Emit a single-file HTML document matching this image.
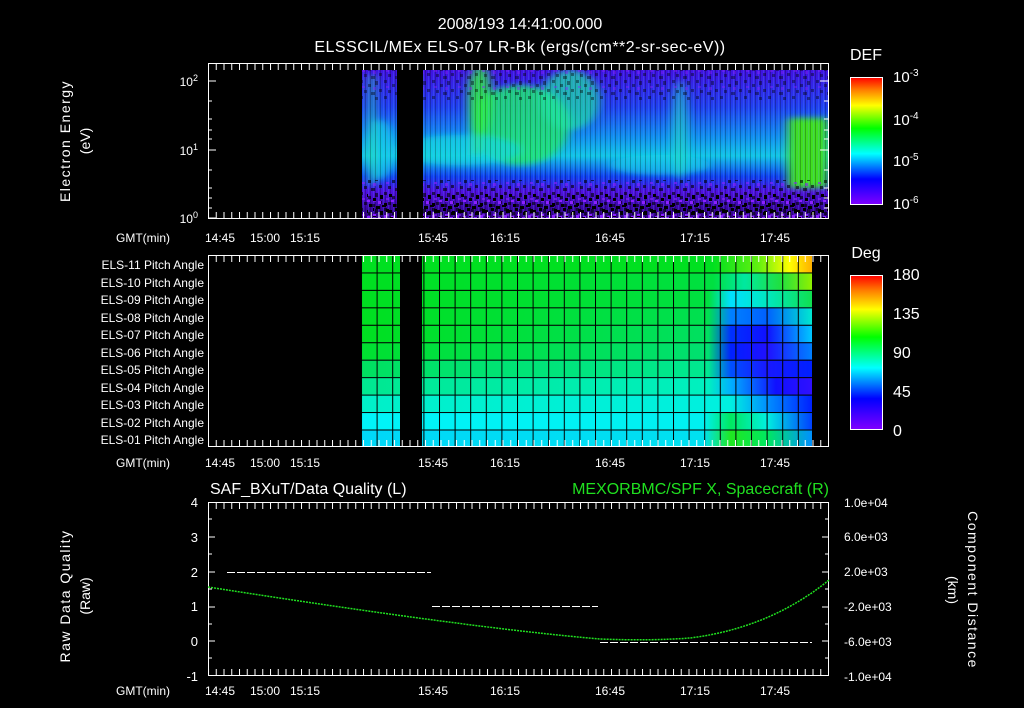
<!DOCTYPE html>
<html><head><meta charset="utf-8"><style>
html,body{margin:0;padding:0;background:#000;}
svg{display:block;font-family:"Liberation Sans",sans-serif;}
</style></head><body>
<svg width="1024" height="708" viewBox="0 0 1024 708" xmlns="http://www.w3.org/2000/svg">
<defs>
<filter id="bl" x="-0.1" y="-0.1" width="1.2" height="1.2"><feGaussianBlur stdDeviation="5 3"/></filter>
<linearGradient id="cb" x1="0" y1="1" x2="0" y2="0">
<stop offset="0" stop-color="#8000ff"/><stop offset="0.2" stop-color="#0000ff"/><stop offset="0.4" stop-color="#00ffff"/><stop offset="0.6" stop-color="#00ff00"/><stop offset="0.78" stop-color="#ffff00"/><stop offset="0.9" stop-color="#ff8000"/><stop offset="1" stop-color="#ff0000"/>
</linearGradient>
<linearGradient id="sv" x1="0" y1="0" x2="0" y2="1">
<stop offset="0" stop-color="#4010e0"/><stop offset="0.25" stop-color="#2040f0"/><stop offset="0.45" stop-color="#1090f0"/><stop offset="0.58" stop-color="#10c8e8"/><stop offset="0.72" stop-color="#1040f0"/><stop offset="0.82" stop-color="#5010e0"/><stop offset="1" stop-color="#300080"/>
</linearGradient>
<pattern id="noise" width="24" height="16" patternUnits="userSpaceOnUse">
<rect x="0" y="0" width="3" height="3" fill="#000"/><rect x="8" y="4" width="3" height="3" fill="#000"/><rect x="15" y="1" width="3" height="4" fill="#000"/><rect x="4" y="10" width="3" height="3" fill="#000"/><rect x="19" y="9" width="3" height="3" fill="#000"/><rect x="11" y="12" width="4" height="3" fill="#000"/><rect x="2" y="6" width="3" height="2" fill="#8a20ff"/><rect x="13" y="7" width="3" height="3" fill="#8a20ff"/>
</pattern>
<pattern id="vst" width="5" height="10" patternUnits="userSpaceOnUse">
<rect x="0" y="0" width="1" height="10" fill="#000" opacity="0.25"/><rect x="3" y="0" width="1" height="10" fill="#60a0ff" opacity="0.2"/>
</pattern>
<pattern id="grid" x="361" y="255" width="15.6" height="17.45" patternUnits="userSpaceOnUse">
<rect x="0" y="0" width="15.6" height="1" fill="#000"/><rect x="0" y="0" width="1" height="17.45" fill="#000"/>
</pattern>
<pattern id="tx" x="208" y="0" width="7.75" height="10" patternUnits="userSpaceOnUse"><rect x="0" y="0" width="1" height="10" fill="#fff"/></pattern>
<linearGradient id="r1" x1="361" x2="812" gradientUnits="userSpaceOnUse"><stop offset="0" stop-color="#00e020"/><stop offset="0.78" stop-color="#00e020"/><stop offset="0.88" stop-color="#60f010"/><stop offset="0.95" stop-color="#ffff00"/><stop offset="1" stop-color="#ffb000"/></linearGradient>
<linearGradient id="r2" x1="361" x2="812" gradientUnits="userSpaceOnUse"><stop offset="0" stop-color="#00e020"/><stop offset="0.78" stop-color="#00e040"/><stop offset="0.85" stop-color="#00e8a0"/><stop offset="0.93" stop-color="#20e040"/><stop offset="1" stop-color="#90f000"/></linearGradient>
<linearGradient id="r3" x1="361" x2="812" gradientUnits="userSpaceOnUse"><stop offset="0" stop-color="#00e020"/><stop offset="0.77" stop-color="#00e040"/><stop offset="0.82" stop-color="#00e0ff"/><stop offset="0.9" stop-color="#00e8c0"/><stop offset="1" stop-color="#10e050"/></linearGradient>
<linearGradient id="r4" x1="361" x2="812" gradientUnits="userSpaceOnUse"><stop offset="0" stop-color="#00e020"/><stop offset="0.77" stop-color="#00e050"/><stop offset="0.82" stop-color="#0080ff"/><stop offset="0.9" stop-color="#0060ff"/><stop offset="1" stop-color="#00e8d0"/></linearGradient>
<linearGradient id="r5" x1="361" x2="812" gradientUnits="userSpaceOnUse"><stop offset="0" stop-color="#00e020"/><stop offset="0.77" stop-color="#00e060"/><stop offset="0.82" stop-color="#0030ff"/><stop offset="0.9" stop-color="#1010ff"/><stop offset="1" stop-color="#00c8ff"/></linearGradient>
<linearGradient id="r6" x1="361" x2="812" gradientUnits="userSpaceOnUse"><stop offset="0" stop-color="#00e030"/><stop offset="0.77" stop-color="#00e070"/><stop offset="0.82" stop-color="#0020ff"/><stop offset="0.9" stop-color="#2010ff"/><stop offset="1" stop-color="#0080ff"/></linearGradient>
<linearGradient id="r7" x1="361" x2="812" gradientUnits="userSpaceOnUse"><stop offset="0" stop-color="#00e060"/><stop offset="0.77" stop-color="#00e890"/><stop offset="0.82" stop-color="#0050ff"/><stop offset="0.9" stop-color="#1818ff"/><stop offset="1" stop-color="#0020ff"/></linearGradient>
<linearGradient id="r8" x1="361" x2="812" gradientUnits="userSpaceOnUse"><stop offset="0" stop-color="#00e890"/><stop offset="0.77" stop-color="#00f0c0"/><stop offset="0.82" stop-color="#00b0ff"/><stop offset="0.92" stop-color="#1010ff"/><stop offset="1" stop-color="#3010ff"/></linearGradient>
<linearGradient id="r9" x1="361" x2="812" gradientUnits="userSpaceOnUse"><stop offset="0" stop-color="#00f0c8"/><stop offset="0.82" stop-color="#00f0e0"/><stop offset="0.9" stop-color="#0090ff"/><stop offset="1" stop-color="#0020ff"/></linearGradient>
<linearGradient id="r10" x1="361" x2="812" gradientUnits="userSpaceOnUse"><stop offset="0" stop-color="#00f4f8"/><stop offset="0.76" stop-color="#00f0f0"/><stop offset="0.82" stop-color="#00e860"/><stop offset="0.9" stop-color="#00f0e0"/><stop offset="1" stop-color="#0040ff"/></linearGradient>
<linearGradient id="r11" x1="361" x2="812" gradientUnits="userSpaceOnUse"><stop offset="0" stop-color="#00d8f8"/><stop offset="0.76" stop-color="#00e0f0"/><stop offset="0.82" stop-color="#20e820"/><stop offset="0.9" stop-color="#00e860"/><stop offset="1" stop-color="#0090ff"/></linearGradient>
<clipPath id="c1"><rect x="362" y="70" width="466" height="149"/></clipPath>
</defs>
<g fill="#fff" font-size="16" text-anchor="middle">
<text x="520" y="29">2008/193 14:41:00.000</text>
<text x="520" y="52" letter-spacing="0.5">ELSSCIL/MEx ELS-07 LR-Bk  (ergs/(cm**2-sr-sec-eV))</text>
</g>
<!-- Panel 1 -->
<g clip-path="url(#c1)">
<rect x="362" y="70" width="466" height="148" fill="url(#sv)"/>
<g filter="url(#bl)">
<ellipse cx="520" cy="125" rx="50" ry="40" fill="#20e870" opacity="0.85"/>
<ellipse cx="480" cy="100" rx="12" ry="35" fill="#30f040" opacity="0.8"/>
<ellipse cx="570" cy="100" rx="30" ry="30" fill="#20e8a0" opacity="0.7"/>
<ellipse cx="460" cy="150" rx="60" ry="15" fill="#10d8e0" opacity="0.7"/>
<ellipse cx="660" cy="165" rx="50" ry="10" fill="#10d8e8" opacity="0.6"/>
<ellipse cx="680" cy="130" rx="8" ry="50" fill="#20e0c0" opacity="0.6"/>
<ellipse cx="380" cy="150" rx="14" ry="30" fill="#10d0e8" opacity="0.7"/>
<rect x="788" y="118" width="40" height="70" rx="4" fill="#40e020"/>
<rect x="370" y="75" width="4" height="110" fill="#20e890"/>
<rect x="474" y="75" width="4" height="80" fill="#30f040"/>
</g>
<rect x="362" y="70" width="466" height="148" fill="url(#vst)"/>
<rect x="362" y="70" width="466" height="30" fill="url(#noise)" opacity="0.4"/>
<rect x="362" y="180" width="466" height="38" fill="url(#noise)" opacity="0.6"/>
<rect x="362" y="192" width="466" height="26" fill="url(#noise)" transform="translate(5 2)"/>
<rect x="362" y="205" width="466" height="14" fill="url(#noise)" transform="translate(11 0)"/>
</g>
<rect x="397" y="70" width="26" height="149" fill="#000"/>
<rect x="208" y="64" width="620" height="6" fill="url(#tx)"/>
<rect x="208" y="212" width="620" height="6" fill="url(#tx)"/>
<rect x="208.5" y="63.5" width="620" height="155" fill="none" stroke="#fff"/>
<g fill="#fff" font-size="12" text-anchor="end">
<text x="198" y="86">10<tspan font-size="9" dy="-5">2</tspan></text>
<text x="198" y="155">10<tspan font-size="9" dy="-5">1</tspan></text>
<text x="198" y="223">10<tspan font-size="9" dy="-5">0</tspan></text>
</g>
<g stroke="#fff">
<path d="M208 81h8M208 150h8M208 218h8M828 81h-8M828 150h-8M828 101h-4M828 119h-4M828 130h-4M828 139h-4M828 170h-4M828 188h-4M828 198h-4M828 208h-4M208 101h4M208 119h4M208 130h4M208 139h4M208 170h4M208 188h4M208 198h4M208 208h4"/>
</g>
<text transform="translate(70 141) rotate(-90)" fill="#fff" font-size="14" text-anchor="middle" letter-spacing="1.5">Electron Energy</text>
<text transform="translate(90 141) rotate(-90)" fill="#fff" font-size="14" text-anchor="middle">(eV)</text>
<text x="866" y="60" fill="#fff" font-size="16" text-anchor="middle">DEF</text>
<rect x="850.5" y="77.5" width="32" height="127" fill="url(#cb)" stroke="#fff"/>
<g fill="#fff" font-size="15">
<text x="893" y="82">10<tspan font-size="10" dy="-6">-3</tspan></text>
<text x="893" y="125">10<tspan font-size="10" dy="-6">-4</tspan></text>
<text x="893" y="166">10<tspan font-size="10" dy="-6">-5</tspan></text>
<text x="893" y="209">10<tspan font-size="10" dy="-6">-6</tspan></text>
</g>
<!-- Panel 2 -->
<g>
<rect x="361" y="255" width="451" height="17.5" fill="url(#r1)"/>
<rect x="361" y="272.4" width="451" height="17.5" fill="url(#r2)"/>
<rect x="361" y="289.9" width="451" height="17.5" fill="url(#r3)"/>
<rect x="361" y="307.3" width="451" height="17.5" fill="url(#r4)"/>
<rect x="361" y="324.8" width="451" height="17.5" fill="url(#r5)"/>
<rect x="361" y="342.2" width="451" height="17.5" fill="url(#r6)"/>
<rect x="361" y="359.7" width="451" height="17.5" fill="url(#r7)"/>
<rect x="361" y="377.1" width="451" height="17.5" fill="url(#r8)"/>
<rect x="361" y="394.6" width="451" height="17.5" fill="url(#r9)"/>
<rect x="361" y="412" width="451" height="17.5" fill="url(#r10)"/>
<rect x="361" y="429.5" width="451" height="17.5" fill="url(#r11)"/>
<rect x="361" y="255" width="452" height="192" fill="url(#grid)"/>
<rect x="400" y="255" width="22" height="192" fill="#000"/>
</g>
<rect x="208" y="256" width="620" height="6" fill="url(#tx)"/>
<rect x="208" y="440" width="620" height="6" fill="url(#tx)"/>
<rect x="208.5" y="255.5" width="620" height="191" fill="none" stroke="#fff"/>
<g fill="#fff" font-size="12" text-anchor="end">
<text x="204" y="269">ELS-11 Pitch Angle</text>
<text x="204" y="287">ELS-10 Pitch Angle</text>
<text x="204" y="304">ELS-09 Pitch Angle</text>
<text x="204" y="322">ELS-08 Pitch Angle</text>
<text x="204" y="339">ELS-07 Pitch Angle</text>
<text x="204" y="357">ELS-06 Pitch Angle</text>
<text x="204" y="374">ELS-05 Pitch Angle</text>
<text x="204" y="392">ELS-04 Pitch Angle</text>
<text x="204" y="409">ELS-03 Pitch Angle</text>
<text x="204" y="427">ELS-02 Pitch Angle</text>
<text x="204" y="444">ELS-01 Pitch Angle</text>
</g>
<text x="866" y="258" fill="#fff" font-size="16" text-anchor="middle">Deg</text>
<rect x="850.5" y="275.5" width="32" height="154" fill="url(#cb)" stroke="#fff"/>
<g fill="#fff" font-size="16">
<text x="893" y="280">180</text><text x="893" y="319">135</text><text x="893" y="358">90</text><text x="893" y="397">45</text><text x="893" y="436">0</text>
</g>
<!-- Panel 3 -->
<text x="210" y="494" fill="#fff" font-size="16">SAF_BXuT/Data Quality (L)</text>
<text x="829" y="494" fill="#20e020" font-size="16" text-anchor="end">MEXORBMC/SPF X, Spacecraft (R)</text>
<rect x="208" y="503" width="620" height="6" fill="url(#tx)"/>
<rect x="208" y="669" width="620" height="6" fill="url(#tx)"/>
<rect x="208.5" y="502.5" width="620" height="173" fill="none" stroke="#fff"/>
<g stroke="#fff">
<path d="M208 537h7M208 572h7M208 607h7M208 641h7M829 537h-7M829 572h-7M829 607h-7M829 641h-7M208 519h4M208 554h4M208 589h4M208 624h4M208 658h4M829 519h-4M829 554h-4M829 589h-4M829 624h-4M829 658h-4"/>
</g>
<g stroke="#fff" stroke-dasharray="8 2" stroke-width="1">
<path d="M227 572.5H431M432 606.5H598M600 642.5H812"/>
</g>
<path d="M208 587 Q 470 628 600 639 Q 650 641 690 638 Q 770 628 829 580" fill="none" stroke="#20e020" stroke-width="1.5" stroke-dasharray="2 1"/>
<g fill="#fff" font-size="13" text-anchor="end">
<text x="198" y="507">4</text><text x="198" y="542">3</text><text x="198" y="577">2</text><text x="198" y="611">1</text><text x="198" y="646">0</text><text x="198" y="681">-1</text>
</g>
<g fill="#fff" font-size="12">
<text x="844" y="507">1.0e+04</text><text x="844" y="541">6.0e+03</text><text x="844" y="576">2.0e+03</text><text x="844" y="611">-2.0e+03</text><text x="844" y="646">-6.0e+03</text><text x="844" y="681">-1.0e+04</text>
</g>
<text transform="translate(70 596) rotate(-90)" fill="#fff" font-size="14" text-anchor="middle" letter-spacing="1.5">Raw Data Quality</text>
<text transform="translate(90 596) rotate(-90)" fill="#fff" font-size="14" text-anchor="middle">(Raw)</text>
<text transform="translate(968 590) rotate(90)" fill="#fff" font-size="14" text-anchor="middle" letter-spacing="1.5">Component Distance</text>
<text transform="translate(948 590) rotate(90)" fill="#fff" font-size="14" text-anchor="middle">(km)</text>
<!-- time axes -->
<g fill="#fff" font-size="12">
<g><text x="116" y="242">GMT(min)</text><text x="205" y="242">14:45</text><text x="250" y="242">15:00</text><text x="290" y="242">15:15</text><text x="418" y="242">15:45</text><text x="490" y="242">16:15</text><text x="595" y="242">16:45</text><text x="680" y="242">17:15</text><text x="760" y="242">17:45</text></g>
<g transform="translate(0 225)"><text x="116" y="242">GMT(min)</text><text x="205" y="242">14:45</text><text x="250" y="242">15:00</text><text x="290" y="242">15:15</text><text x="418" y="242">15:45</text><text x="490" y="242">16:15</text><text x="595" y="242">16:45</text><text x="680" y="242">17:15</text><text x="760" y="242">17:45</text></g>
<g transform="translate(0 453)"><text x="116" y="242">GMT(min)</text><text x="205" y="242">14:45</text><text x="250" y="242">15:00</text><text x="290" y="242">15:15</text><text x="418" y="242">15:45</text><text x="490" y="242">16:15</text><text x="595" y="242">16:45</text><text x="680" y="242">17:15</text><text x="760" y="242">17:45</text></g>
</g>
</svg>
</body></html>
